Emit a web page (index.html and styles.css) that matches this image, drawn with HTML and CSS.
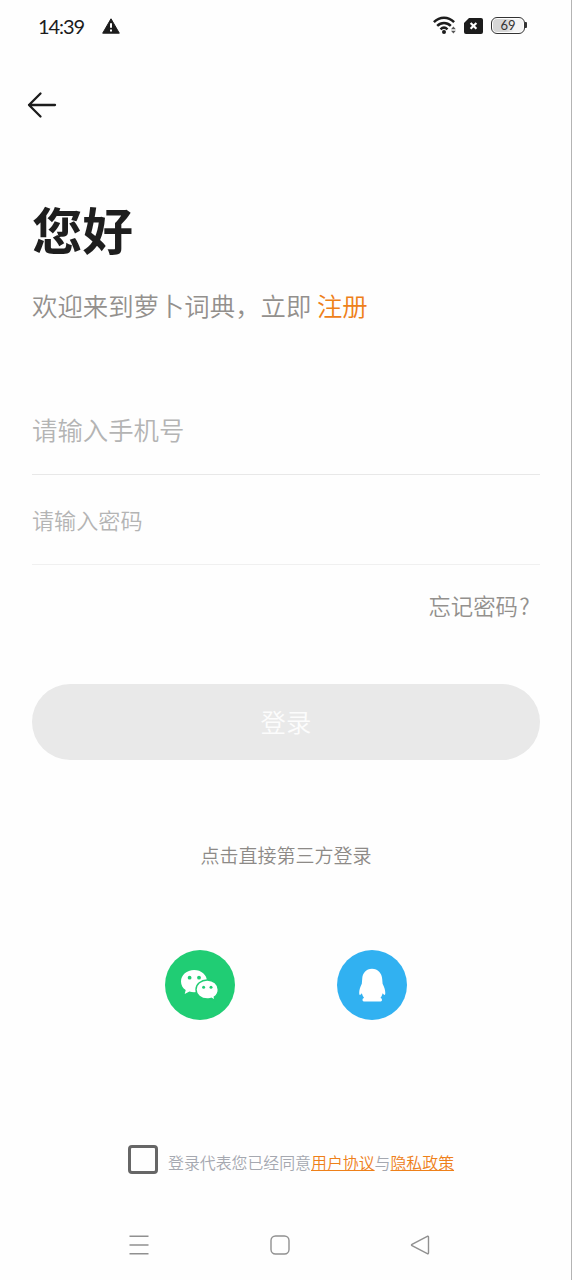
FILE: index.html
```html
<!DOCTYPE html>
<html lang="zh-CN">
<head>
<meta charset="utf-8">
<title>登录</title>
<link rel="stylesheet" href="styles.css">
</head>
<body>
<div class="screen">
  <header class="status">
    <span class="time">14:39</span>
    <svg class="warn" width="18" height="16" viewBox="0 0 18 16"><path d="M9 .8 17.3 15.2H.7Z" fill="#1c1c1c" stroke="#1c1c1c" stroke-linejoin="round"/><path d="M9 5.2v4.6M9 11.4v2" stroke="#fff" stroke-width="2"/></svg>
    <div class="status-right">
      <svg width="24" height="19" viewBox="0 0 24 19" fill="none" stroke="#1c1c1c" stroke-width="2.5"><path d="M.9 6.1C6.8.2 15.2.2 21.1 6.1M4.2 9.8c4-3.9 9.6-3.9 13.6 0M7.5 13.3c2.1-2 4.9-2 7 0"/><circle cx="11" cy="16" r="2" fill="#1c1c1c" stroke="none"/><path d="m18 13.2 2.4-2.7 2.4 2.7zM18 14.7h4.8l-2.4 2.7z" fill="#555" stroke="none"/></svg>
      <svg class="sim" width="19" height="16" viewBox="0 0 19 16"><path d="M5 0h12a2 2 0 0 1 2 2v12a2 2 0 0 1-2 2H2a2 2 0 0 1-2-2V5z" fill="#1c1c1c"/><path d="m6.6 5 5.800 5.800m0-5.800-5.800 5.800" stroke="#fff" stroke-width="2.2"/></svg>
      <div class="battery"><span>69</span></div>
    </div>
  </header>

  <nav class="topbar">
    <svg width="30" height="28" viewBox="0 0 30 28" fill="none" stroke="#1c1c1c" stroke-width="2.3" stroke-linecap="round" stroke-linejoin="round"><path d="M28 14H2M13.500 2.500 2 14l11.500 11.500"/></svg>
  </nav>

  <main class="content">
    <h1 class="title">您好</h1>
    <p class="welcome">欢迎来到萝卜词典，立即 <a class="register">注册</a></p>
    <div class="field phone">请输入手机号</div>
    <div class="field password">请输入密码</div>
    <a class="forgot">忘记密码<span class="mark">?</span></a>
    <div class="login">登录</div>
    <p class="third">点击直接第三方登录</p>
    <div class="social">
      <svg width="70" height="70" viewBox="0 0 70 70"><circle cx="35" cy="35" r="35" fill="#20cd74"/><path d="M29.1 20C21.800 20 16 25 16 31.400c0 3.600 1.800 6.600 4.700 8.700L19.700 43.900l4.700-2.500c1.500.5 3 .8 4.700.8C36.300 42.200 42 37.500 42 31.200S36.300 20 29.100 20Z" fill="#fff"/><path d="M42.200 30C48.400 30 53.300 34.300 53.300 39.700c0 3-1.500 5.600-4 7.400l.9 3.200-4-2c-1.300.4-2.600.7-4 .7C36 49 31 44.900 31 39.600S36 30 42.200 30Z" fill="#fff" stroke="#20cd74" stroke-width="1.400"/><g fill="#20cd74"><circle cx="24.600" cy="27.700" r="1.900"/><circle cx="34" cy="27.700" r="1.900"/><circle cx="38.600" cy="37.300" r="1.500"/><circle cx="46" cy="37.300" r="1.500"/></g></svg>
      <svg width="70" height="70" viewBox="0 0 70 70"><circle cx="35" cy="35" r="35" fill="#31b1f1"/><path d="M35 18.800c-6 0-9.500 4.300-9.800 10.200l-.4 4.800c-1.700 3.200-2.600 6.400-2.600 9.200 0 2 .6 2.500 1.600 1.500l1-1.200c.5 1.800 1.200 3.500 2.300 4.800-1.300.4-1.800 1.100-1.500 2.300.2.800.9 1.100 2 1.100h15.300c1.100 0 1.800-.3 2-1.100.3-1.200-.2-1.900-1.500-2.300 1.100-1.300 1.800-3 2.300-4.800l1 1.200c1 1 1.600.5 1.600-1.500 0-2.800-1-6-2.700-9.200l-.4-4.800C44.700 23.100 41 18.800 35 18.800Z" fill="#fff"/></svg>
    </div>
    <div class="terms">
      <span class="checkbox"></span>
      <span class="terms-text">登录代表您已经同意<a>用户协议</a>与<a>隐私政策</a></span>
    </div>
  </main>

  <footer class="navbar">
    <svg width="20" height="20" viewBox="0 0 20 20"><path d="M.5 1.200h19M.5 10h19M.5 18.800h19"/></svg>
    <svg width="20" height="20" viewBox="0 0 20 20"><rect x="1" y="1" width="18" height="18" rx="4.500"/></svg>
    <svg width="20" height="20" viewBox="0 0 20 20"><path d="M17.300 1.300 2 9.300q-1 .7 0 1.400l15.300 8q1.200.3 1.200-1V2.300q0-1.300-1.200-1Z"/></svg>
  </footer>
</div>
</body>
</html>
```
FILE: styles.css
```css
* { box-sizing: border-box; }
body {
  margin: 0;
  background: #fefefe;
  font-family: "Noto Sans CJK SC", sans-serif;
  font-weight: 350;
}
svg { display: block; flex: none; }
h1, p { margin: 0; }
.screen {
  width: 572px;
  height: 1280px;
  display: flex;
  flex-direction: column;
  border-right: 1px solid #b4b4b4;
  overflow: hidden;
}
.status {
  height: 51px;
  display: flex;
  align-items: center;
  padding: 0 46px 0 38px;
  color: #1c1c1c;
}
.time { width: 64px; font: 400 20px/24px Lato, sans-serif; letter-spacing: -1.1px; }
.status-right { display: flex; align-items: center; margin-left: auto; }
.sim { margin: 0 8px 0 7px; }
.battery {
  position: relative;
  width: 34px;
  height: 17px;
  border: 1.500px solid #333;
  border-radius: 6px;
  background: linear-gradient(90deg, #d6d6d6 45%, #f4f4f4 69%);
  background-clip: content-box;
  padding: 1px;
  display: flex;
  justify-content: center;
  align-items: center;
  font: 400 13px/13px Lato, sans-serif;
  color: #333;
}
.battery::after {
  content: "";
  position: absolute;
  right: -3px;
  top: 4px;
  width: 2px;
  height: 6px;
  border-radius: 0 1px 1px 0;
  background: #333;
}
.topbar { height: 108px; display: flex; align-items: center; padding-left: 27px; }
.content { display: flex; flex-direction: column; padding: 0 31px 0 32px; }
.title {
  margin-top: 29px;
  font-size: 50.500px;
  line-height: 80px;
  font-weight: 700;
  color: #1e1e1e;
}
.welcome {
  margin-top: 17px;
  font-size: 25.400px;
  line-height: 40px;
  color: #93908d;
  white-space: nowrap;
}
.register { color: #ee8019; }
.field { border-bottom: 1px solid #e8e8e8; color: #b4b4b4; }
.phone { margin-top: 62px; height: 88px; font-size: 25.400px; line-height: 85px; }
.password { height: 90px; font-size: 22.100px; line-height: 89px; border-color: #f0f0f0; }
.forgot {
  margin-top: 20px;
  padding-right: 9px;
  text-align: right;
  font-size: 22.400px;
  line-height: 40px;
  color: #93908d;
}
.mark { display: inline-block; width: 13px; text-align: center; }
.login {
  margin-top: 59px;
  height: 76px;
  border-radius: 38px;
  background: #e9e9e9;
  color: #fcfcfc;
  font-size: 25.400px;
  line-height: 74px;
  text-align: center;
}
.third {
  margin-top: 80px;
  font-size: 19px;
  line-height: 30px;
  text-align: center;
  color: #8d8a87;
}
.social { margin-top: 80px; display: flex; justify-content: center; gap: 102px; }
.terms { margin-top: 123px; height: 40px; display: flex; padding-left: 96px; }
.checkbox {
  width: 30px;
  height: 29px;
  margin: 2px 10px 0 0;
  border: 3px solid #666;
  border-radius: 4px;
}
.terms-text {
  font-size: 15.900px;
  line-height: 40px;
  color: #a5a8b0;
  white-space: nowrap;
}
.terms-text a { color: #ee8019; text-decoration: underline; text-decoration-thickness: 1px; text-underline-offset: 1px; }
.navbar {
  height: 70px;
  margin-top: auto;
  display: flex;
  align-items: center;
  justify-content: space-between;
  padding: 0 141px 0 129px;
}
.navbar svg { fill: none; stroke: #909090; stroke-width: 1.400; }
```
